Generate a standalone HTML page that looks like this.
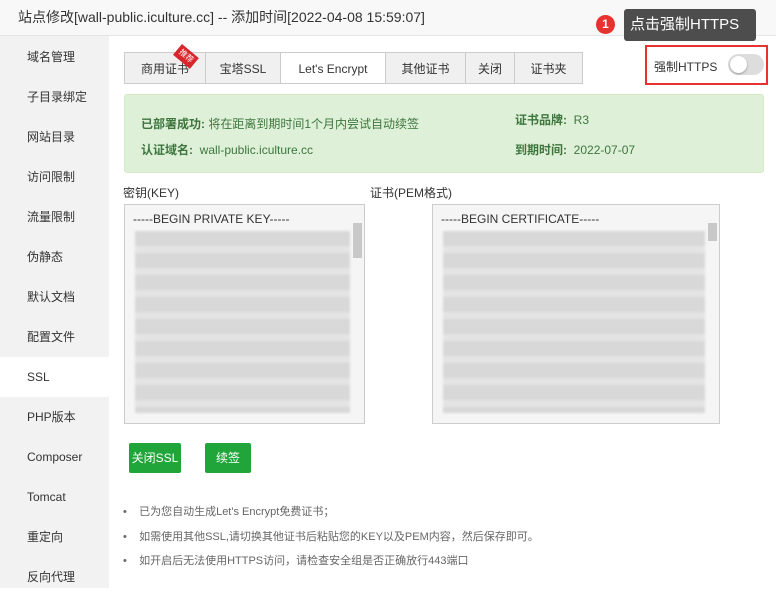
<!DOCTYPE html><html><head><meta charset="utf-8"><style>
*{box-sizing:border-box;margin:0;padding:0}
body{width:776px;height:588px;overflow:hidden;background:#fff;font-family:"Liberation Sans","Noto Sans CJK SC",sans-serif;font-size:12px;color:#333;position:relative}
.a{position:absolute}
.hd{left:0;top:0;width:776px;height:36px;background:#f8f8f8;border-bottom:1px solid #e5e5e5;font-size:14px;line-height:34px;padding-left:18px;color:#333}
.sb{left:0;top:36px;width:109px;height:552px;background:#f2f2f2}
.sb div{height:40px;line-height:40px;padding-left:27px;font-size:12px;color:#333}
.sb .on{background:#fff}
.tab{top:52px;height:32px;line-height:32px;text-align:center;border:1px solid #ccc;background:#f0f0f0;font-size:12px}
.ta{background:#f5f5f5;border:1px solid #ccc}
.blk{position:absolute;left:10px;right:14px;top:26px;bottom:10px;background:repeating-linear-gradient(#d8d8d8 0 15px,#e4e4e4 15px 22px);filter:blur(1px)}
.btn{top:443px;height:30px;line-height:30px;background:#20a53a;color:#fff;text-align:center;border-radius:2px;font-size:12px}
.li{left:123px;font-size:11px;color:#666}
</style></head><body>
<div class="a hd">站点修改[wall-public.iculture.cc] -- 添加时间[2022-04-08 15:59:07]</div>
<div class="a sb"><div style="margin-top:1px">域名管理</div><div>子目录绑定</div><div>网站目录</div><div>访问限制</div><div>流量限制</div><div>伪静态</div><div>默认文档</div><div>配置文件</div><div class="on">SSL</div><div>PHP版本</div><div>Composer</div><div>Tomcat</div><div>重定向</div><div>反向代理</div></div>
<div class="a tab" style="left:124px;width:82px">商用证书</div>
<div class="a" style="left:176px;top:52px;width:22px;height:14px;background:#d9262c;transform:rotate(40deg);transform-origin:0 0;left:182px;top:44px;color:#fff;font-size:8px;line-height:14px;text-align:center">推荐</div>
<div class="a tab" style="left:205px;width:76px">宝塔SSL</div>
<div class="a tab" style="left:280px;width:106px;background:#fff;border-bottom-color:#fff">Let's Encrypt</div>
<div class="a tab" style="left:385px;width:81px">其他证书</div>
<div class="a tab" style="left:465px;width:50px">关闭</div>
<div class="a tab" style="left:514px;width:69px">证书夹</div>
<div class="a" style="left:124px;top:83px;width:458px;height:1px;background:#ccc"></div>
<div class="a" style="left:654px;top:58px;font-size:12px">强制HTTPS</div>
<div class="a" style="left:728px;top:54px;width:36px;height:21px;border-radius:11px;background:#ddd"><div class="a" style="left:2px;top:2px;width:17px;height:17px;border-radius:50%;background:#fff;box-shadow:0 1px 2px #999"></div></div>
<div class="a" style="left:645px;top:45px;width:123px;height:40px;border:2px solid #e8322f"></div>
<div class="a" style="left:624px;top:9px;width:132px;height:32px;background:#4d4d4d;border-radius:3px;color:#fff;font-size:15px;line-height:32px;padding-left:6px">点击强制HTTPS</div>
<div class="a" style="left:596px;top:15px;width:19px;height:19px;border-radius:50%;background:#e8322f;color:#fff;font-size:12px;text-align:center;line-height:19px;font-weight:bold">1</div>
<div class="a" style="left:124px;top:94px;width:640px;height:79px;background:#dff0d8;border:1px solid #d6e9c6;border-radius:3px;color:#3c763d;font-size:12px">
<div class="a" style="left:16px;top:20px"><b>已部署成功:</b> 将在距离到期时间1个月内尝试自动续签</div>
<div class="a" style="left:16px;top:46px"><b>认证域名:</b>&nbsp; wall-public.iculture.cc</div>
<div class="a" style="left:390px;top:16px"><b>证书品牌:</b>&nbsp; R3</div>
<div class="a" style="left:390px;top:46px"><b>到期时间:</b>&nbsp; 2022-07-07</div></div>
<div class="a" style="left:123px;top:184px">密钥(KEY)</div>
<div class="a" style="left:370px;top:184px">证书(PEM格式)</div>
<div class="a ta" style="left:124px;top:204px;width:241px;height:220px"><div class="a" style="left:8px;top:7px">-----BEGIN PRIVATE KEY-----</div><div class="blk"></div><div class="a" style="right:2px;top:18px;width:9px;height:35px;background:#c8c8c8"></div></div>
<div class="a ta" style="left:432px;top:204px;width:288px;height:220px"><div class="a" style="left:8px;top:7px">-----BEGIN CERTIFICATE-----</div><div class="blk"></div><div class="a" style="right:2px;top:18px;width:9px;height:18px;background:#c8c8c8"></div></div>
<div class="a btn" style="left:129px;width:52px">关闭SSL</div>
<div class="a btn" style="left:205px;width:46px">续签</div>
<div class="a li" style="top:503px">•&nbsp;&nbsp;&nbsp; 已为您自动生成Let's Encrypt免费证书；</div>
<div class="a li" style="top:528px">•&nbsp;&nbsp;&nbsp; 如需使用其他SSL,请切换其他证书后粘贴您的KEY以及PEM内容，然后保存即可。</div>
<div class="a li" style="top:552px">•&nbsp;&nbsp;&nbsp; 如开启后无法使用HTTPS访问，请检查安全组是否正确放行443端口</div>
</body></html>
